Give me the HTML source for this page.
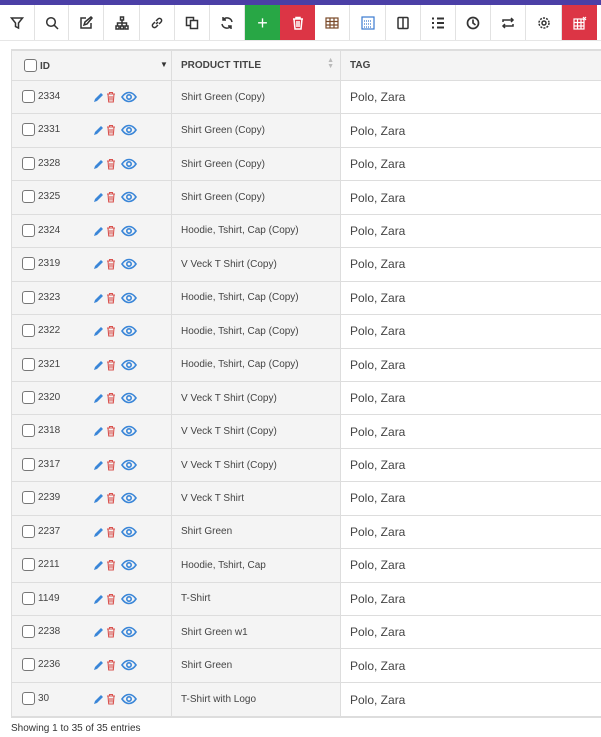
<!DOCTYPE html><html><head><style>
*{box-sizing:border-box;margin:0;padding:0}
body{width:601px;height:737px;background:#fff;font-family:"Liberation Sans",sans-serif;position:relative;overflow:hidden;color:#333}
.top{position:absolute;left:0;top:0;width:601px;height:5px;background:#4b3fa6}
.tb{position:absolute;top:5px;height:35px;border-right:1px solid #e2e2e2;display:flex;align-items:center;justify-content:center}
.tb svg{width:14px;height:14px;fill:none;stroke:#333;stroke-width:1.5}
.tbline{position:absolute;left:0;top:40px;width:601px;height:1px;background:#e6e6e6}
.wrap{position:absolute;left:11px;top:49px;width:600px;border:1px solid #ddd;border-right:none;border-top:2px solid #ddd;border-bottom:2px solid #ddd}
.row{display:flex;height:33.45px;border-bottom:1px solid #ddd}
.row:last-child{border-bottom:none}
.c1{width:160px;background:#f4f4f4;border-right:1px solid #ddd;position:relative}
.c2{width:169px;background:#f4f4f4;border-right:1px solid #ddd;font-size:10px;padding-left:9px;display:flex;align-items:center;color:#444}
.c3{flex:1;font-size:12px;padding-left:9px;display:flex;align-items:center;color:#444}
.hd{height:30px;background:#f4f4f4}
.hd .c3{background:#f4f4f4;font-size:10px;font-weight:bold;color:#444}
.hd .c2{font-weight:bold;color:#444;position:relative}
.cb{position:absolute;left:10px;top:9px;width:13px;height:13px;border:1px solid #777;border-radius:3px;background:#fff}
.id{position:absolute;left:26px;top:10px;font-size:10px;color:#444}
.ic{position:absolute;left:81px;top:9px}
.foot{position:absolute;left:11px;top:723px;font-size:10px;color:#333}
</style></head><body>
<div class="top"></div>
<div class="tb" style="left:0;width:35px"><svg viewBox="0 0 14 14"><path d="M1.5 2h11L8.5 7v5L5.5 10.5V7z"/></svg></div>
<div class="tb" style="left:35px;width:34px"><svg viewBox="0 0 14 14"><circle cx="6" cy="6" r="4.3"/><path d="M9.2 9.2L13 13"/></svg></div>
<div class="tb" style="left:69px;width:35px"><svg viewBox="0 0 14 14"><path d="M7 2H2v10h10V7"/><path d="M5 9l1-3 6-5 1 1-5 6z"/></svg></div>
<div class="tb" style="left:104px;width:36px"><svg viewBox="0 0 14 14"><rect x="5.5" y="1" width="3" height="3"/><rect x="1" y="10" width="3" height="3"/><rect x="5.5" y="10" width="3" height="3"/><rect x="10" y="10" width="3" height="3"/><path d="M7 4v6M2.5 10V7h9v3"/></svg></div>
<div class="tb" style="left:140px;width:35px"><svg viewBox="0 0 14 14"><path d="M6 8l2-2M5 6L3 8a2 2 0 003 3l2-2M9 8l2-2a2 2 0 00-3-3L6 5"/></svg></div>
<div class="tb" style="left:175px;width:35px"><svg viewBox="0 0 14 14"><rect x="1.5" y="1.5" width="7" height="8"/><rect x="5.5" y="4.5" width="7" height="8" fill="#fff"/></svg></div>
<div class="tb" style="left:210px;width:35px"><svg viewBox="0 0 14 14"><path d="M12 6A5 5 0 003 4M2 8a5 5 0 009 2M3 1v3h3M11 13v-3H8"/></svg></div>
<div class="tb" style="left:245px;width:35px;background:#28a745;border:none"><span style="color:#fff;font-size:18px;line-height:1">+</span></div>
<div class="tb" style="left:280px;width:35px;background:#dc3545;border:none"><svg viewBox="0 0 14 14" style="stroke:#fff"><path d="M2 3h10M5 3V1.5h4V3M3 3l1 10h6l1-10M6 5v6M8 5v6"/></svg></div>
<div class="tb" style="left:315px;width:35px"><svg viewBox="0 0 14 14" style="stroke:#7a4a2a;stroke-width:1.2"><rect x="1" y="2" width="12" height="10"/><path d="M1 5.5h12M1 9h12M5 2v10M9 2v10"/></svg></div>
<div class="tb" style="left:350px;width:36px"><svg viewBox="0 0 14 14" style="stroke:#3a7ad0;stroke-width:1.2"><rect x="1" y="1" width="12" height="12"/><path d="M3 5h8M3 8h8M3 11h8" stroke-dasharray="1 1"/></svg></div>
<div class="tb" style="left:386px;width:35px"><svg viewBox="0 0 14 14"><rect x="2" y="1.5" width="10" height="11" rx="1"/><path d="M7 1.5v11"/></svg></div>
<div class="tb" style="left:421px;width:35px"><svg viewBox="0 0 14 14" style="stroke-width:2"><path d="M1 2.5h2M6 2.5h7M1 7h2M6 7h7M1 11.5h2M6 11.5h7"/></svg></div>
<div class="tb" style="left:456px;width:35px"><svg viewBox="0 0 14 14" style="stroke-width:1.7"><circle cx="7" cy="7" r="5.5"/><path d="M7 3.5V7l2.5 2"/></svg></div>
<div class="tb" style="left:491px;width:35px"><svg viewBox="0 0 14 14"><path d="M2 6V4h10M10 2l2 2-2 2M12 8v2H2M4 12l-2-2 2-2"/></svg></div>
<div class="tb" style="left:526px;width:36px"><svg viewBox="0 0 14 14"><circle cx="7" cy="7" r="2"/><circle cx="7" cy="7" r="5" stroke-dasharray="2 1.2"/></svg></div>
<div class="tb" style="left:562px;width:35px;background:#dc3545;border:none"><svg viewBox="0 0 14 14" style="stroke:#fff;stroke-width:1.2"><rect x="1" y="3" width="10" height="10"/><path d="M1 6.5h10M1 10h10M4.5 3v10M8 3v10M10 1l3 3M13 1l-3 3"/></svg></div>
<div class="tbline"></div>
<div class="wrap">
<div class="row hd"><div class="c1"><div class="cb" style="top:8px;left:12px"></div><div class="id" style="top:10px;left:28px;font-weight:bold;color:#444">ID</div><span style="position:absolute;left:148px;top:9px;font-size:8px">▼</span></div><div class="c2">PRODUCT TITLE<span style="position:absolute;right:6px;top:7px;font-size:7px;color:#bbb;line-height:6px">▲<br>▼</span></div><div class="c3">TAG</div></div>
ROWS
</div>
<div class="foot">Showing 1 to 35 of 35 entries</div>
<script>
var d=[["2334","Shirt Green (Copy)"],["2331","Shirt Green (Copy)"],["2328","Shirt Green (Copy)"],["2325","Shirt Green (Copy)"],["2324","Hoodie, Tshirt, Cap (Copy)"],["2319","V Veck T Shirt (Copy)"],["2323","Hoodie, Tshirt, Cap (Copy)"],["2322","Hoodie, Tshirt, Cap (Copy)"],["2321","Hoodie, Tshirt, Cap (Copy)"],["2320","V Veck T Shirt (Copy)"],["2318","V Veck T Shirt (Copy)"],["2317","V Veck T Shirt (Copy)"],["2239","V Veck T Shirt"],["2237","Shirt Green"],["2211","Hoodie, Tshirt, Cap"],["1149","T-Shirt"],["2238","Shirt Green w1"],["2236","Shirt Green"],["30","T-Shirt with Logo"]];
var ic='<svg class="ic" width="44" height="14" viewBox="0 0 44 14"><path d="M1 12l1-3 6-6 2 2-6 6z" fill="#3a86d8"/><g fill="none" stroke="#d9534f" stroke-width="1.1"><path d="M14 4h8M16.5 4V2.5h3V4M15 4l.7 8h4.6l.7-8M17 6v4.5M19 6v4.5"/></g><g fill="none" stroke="#3a86d8" stroke-width="1.6"><path d="M29 7c4-6 10-6 14 0-4 6-10 6-14 0z"/><circle cx="36" cy="7" r="2.2"/></g></svg>';
var h='';d.forEach(function(r){h+='<div class="row"><div class="c1"><div class="cb"></div><div class="id">'+r[0]+'</div>'+ic+'</div><div class="c2">'+r[1]+'</div><div class="c3">Polo, Zara</div></div>';});
var w=document.querySelector('.wrap');w.innerHTML=w.innerHTML.replace('ROWS',h);
</script>
</body></html>
